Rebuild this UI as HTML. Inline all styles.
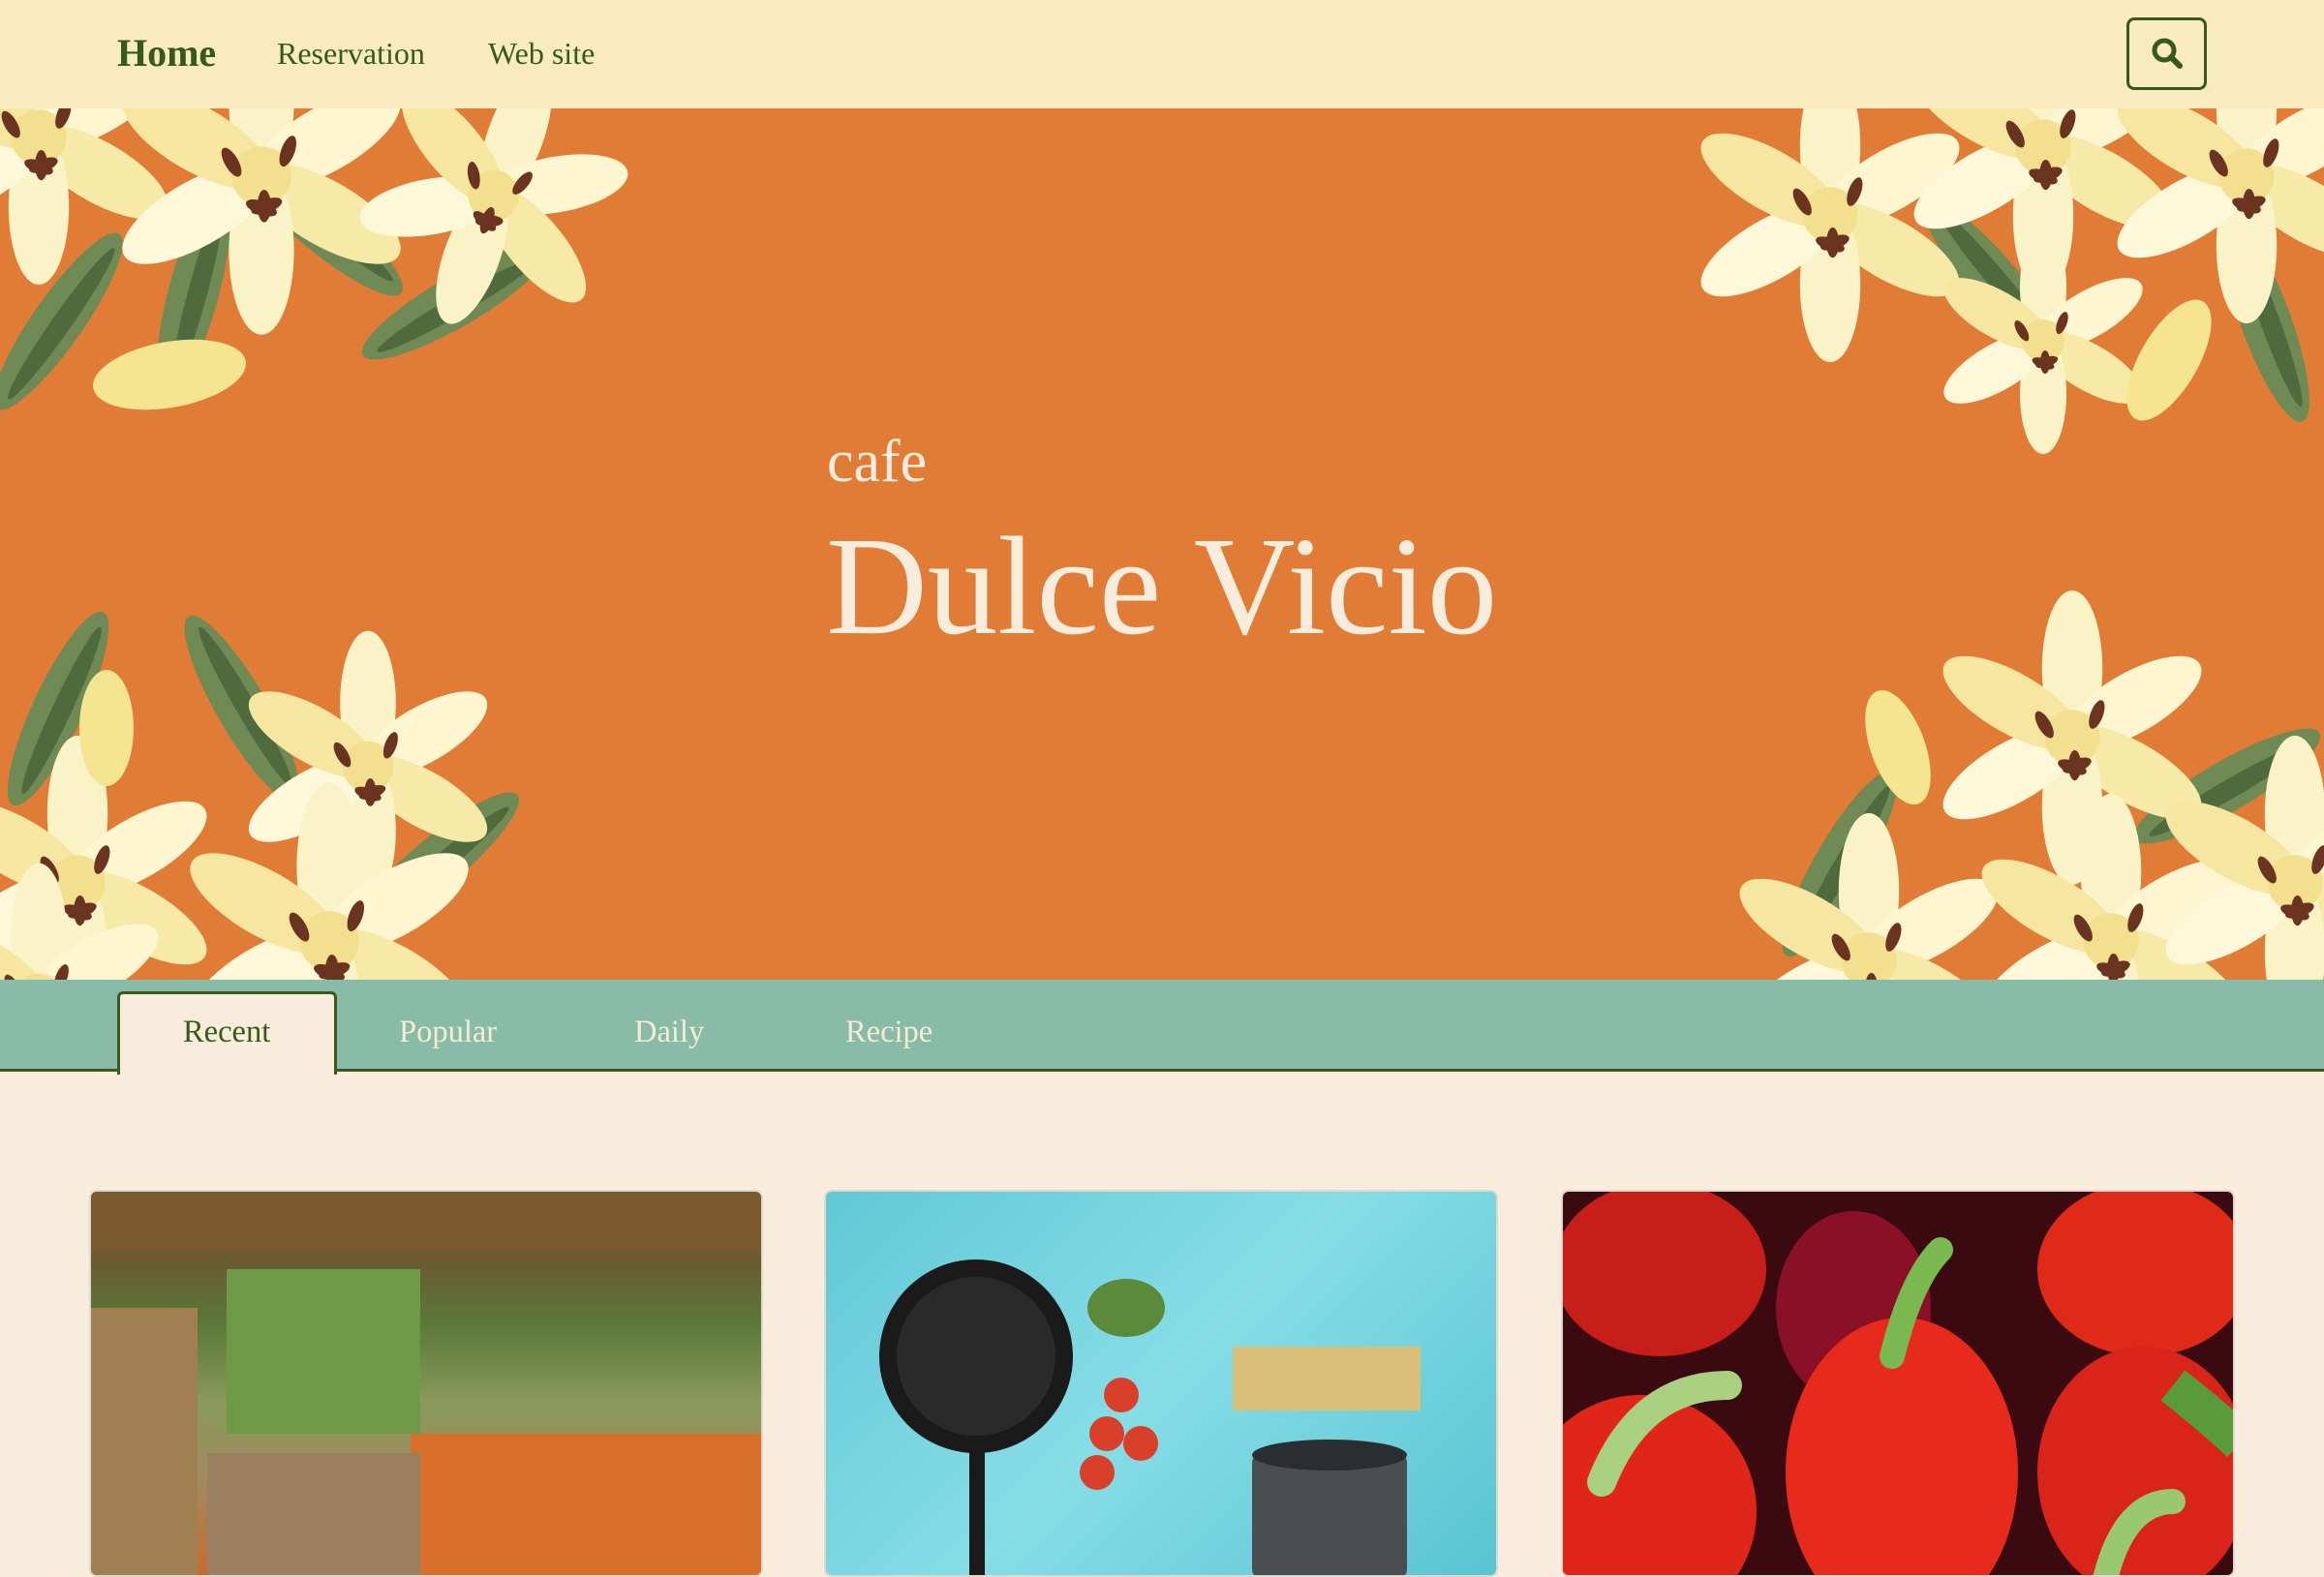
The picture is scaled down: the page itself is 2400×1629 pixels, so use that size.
<!DOCTYPE html>
<html><head><meta charset="utf-8">
<style>
*{margin:0;padding:0;box-sizing:border-box}
body{width:2400px;height:1606px;overflow:hidden;background:#f8ecdc;font-family:"Liberation Serif",serif;position:relative}
.nav{position:absolute;left:0;top:0;width:2400px;height:112px;background:#f9ebbe}
.nav span{position:absolute;color:#365a1c;white-space:nowrap}
.hero{position:absolute;left:0;top:112px;width:2400px;height:900px;background:#e17c36;overflow:hidden}
.t{position:absolute;color:#f8ecdc;white-space:nowrap;line-height:1}
.tabs{position:absolute;left:0;top:1012px;width:2400px;height:95px;background:#88bca8;border-bottom:3px solid #3a5a1c}
.tab{position:absolute;top:0;font-size:32.5px;color:#f6ecd6;line-height:1;white-space:nowrap}
.active{position:absolute;left:121px;top:12px;width:227px;height:86px;background:#f8ecdc;border:3px solid #3a5a1c;border-bottom:none;border-radius:6px 6px 0 0}
.card{position:absolute;top:1229px;width:696px;height:400px;border-radius:8px;overflow:hidden;border:2px solid #e0d8d0}
</style></head><body>
<div class="nav">
<span style="left:121px;top:31px;font-size:40px;font-weight:bold">Home</span>
<span style="left:286px;top:37px;font-size:32px">Reservation</span>
<span style="left:504px;top:37px;font-size:32px">Web site</span>
<div style="position:absolute;left:2196px;top:18px;width:83px;height:75px;border:3px solid #365a1c;border-radius:8px"></div>
<svg style="position:absolute;left:2196px;top:18px" width="83" height="75"><circle cx="39" cy="34" r="10" fill="none" stroke="#365a1c" stroke-width="5"/><line x1="46" y1="41" x2="55" y2="50" stroke="#365a1c" stroke-width="6" stroke-linecap="round"/></svg>
</div>
<div class="hero">
<svg width="2400" height="900" style="position:absolute;left:0;top:0">
<defs>
<g id="lily">
<ellipse cx="0" cy="-55" rx="24" ry="62" fill="#fbf3c8"/>
<ellipse cx="0" cy="-55" rx="24" ry="62" fill="#fdf6d0" transform="rotate(60)"/>
<ellipse cx="0" cy="-55" rx="24" ry="62" fill="#f7e9a8" transform="rotate(120)"/>
<ellipse cx="0" cy="-55" rx="24" ry="62" fill="#fbf3c8" transform="rotate(180)"/>
<ellipse cx="0" cy="-55" rx="24" ry="62" fill="#fdf8da" transform="rotate(240)"/>
<ellipse cx="0" cy="-55" rx="24" ry="62" fill="#f6e6a0" transform="rotate(300)"/>
<circle r="22" fill="#f2e08e"/>
<ellipse cx="-14" cy="-20" rx="5" ry="12" fill="#6a3420" transform="rotate(-30)"/>
<ellipse cx="12" cy="-24" rx="5" ry="12" fill="#6a3420" transform="rotate(20)"/>
<ellipse cx="22" cy="4" rx="5" ry="12" fill="#6a3420" transform="rotate(70)"/>
<ellipse cx="-22" cy="8" rx="5" ry="12" fill="#6a3420" transform="rotate(-70)"/>
<ellipse cx="2" cy="22" rx="5" ry="12" fill="#6a3420"/>
</g>
<g id="leaf"><ellipse cx="0" cy="0" rx="26" ry="110" fill="#6f8a54"/><ellipse cx="4" cy="0" rx="10" ry="95" fill="#4f6a3c"/></g>
</defs>
<use href="#leaf" transform="translate(60,220) rotate(35)"/>
<use href="#leaf" transform="translate(200,190) rotate(15)"/>
<use href="#leaf" transform="translate(470,200) rotate(60)"/>
<use href="#leaf" transform="translate(330,120) rotate(-50)"/>
<use href="#lily" transform="translate(40,30) scale(1.3)"/>
<use href="#lily" transform="translate(270,70) scale(1.4)"/>
<use href="#lily" transform="translate(510,90) scale(1.2) rotate(20)"/>
<ellipse cx="175" cy="275" rx="80" ry="34" fill="#f5e490" transform="rotate(-10 175 275)"/>
<use href="#leaf" transform="translate(60,620) rotate(25)"/>
<use href="#leaf" transform="translate(450,780) rotate(50)"/>
<use href="#leaf" transform="translate(250,620) rotate(-30)"/>
<use href="#lily" transform="translate(80,800) scale(1.3)"/>
<use href="#lily" transform="translate(380,680) scale(1.2)"/>
<use href="#lily" transform="translate(340,860) scale(1.4)"/>
<use href="#lily" transform="translate(40,920) scale(1.2)"/>
<ellipse cx="110" cy="640" rx="28" ry="60" fill="#f5e490"/>
<use href="#leaf" transform="translate(2060,180) rotate(-40)"/>
<use href="#leaf" transform="translate(2340,220) rotate(-20)"/>
<use href="#lily" transform="translate(1890,110) scale(1.3)"/>
<use href="#lily" transform="translate(2110,40) scale(1.3)"/>
<use href="#lily" transform="translate(2320,70) scale(1.3)"/>
<use href="#lily" transform="translate(2110,240) scale(1.0)"/>
<ellipse cx="2240" cy="260" rx="30" ry="70" fill="#f5e490" transform="rotate(30 2240 260)"/>
<use href="#leaf" transform="translate(1900,780) rotate(30)"/>
<use href="#leaf" transform="translate(2300,700) rotate(60)"/>
<use href="#lily" transform="translate(2140,650) scale(1.3)"/>
<use href="#lily" transform="translate(1930,880) scale(1.3)"/>
<use href="#lily" transform="translate(2180,860) scale(1.3)"/>
<use href="#lily" transform="translate(2370,800) scale(1.3)"/>
<ellipse cx="1960" cy="660" rx="28" ry="62" fill="#f5e490" transform="rotate(-20 1960 660)"/>
</svg>
<div class="t" style="left:854px;top:334px;font-size:62px">cafe</div>
<div class="t" style="left:853px;top:422px;font-size:145px">Dulce Vicio</div>
</div>
<div class="tabs">
<div class="active"></div>
<div class="tab" style="left:189px;top:38px;color:#365a1c">Recent</div>
<div class="tab" style="left:412px;top:38px">Popular</div>
<div class="tab" style="left:655px;top:38px">Daily</div>
<div class="tab" style="left:873px;top:38px">Recipe</div>
</div>
<div class="card" style="left:92px;background:linear-gradient(180deg,#8a6a38 0%,#6a5a30 18%,#5b7a3a 35%,#8a9a5a 55%,#a08a60 75%,#c86a30 100%)">
<svg width="696" height="400"><rect x="0" y="0" width="696" height="60" fill="#7a5a2c"/><rect x="330" y="250" width="366" height="150" fill="#d8702c"/><rect x="120" y="270" width="220" height="130" fill="#9a8060"/><rect x="140" y="80" width="200" height="170" fill="#6e9a48"/><rect x="0" y="120" width="110" height="280" fill="#a08050"/></svg>
</div>
<div class="card" style="left:851px;background:linear-gradient(135deg,#62c8d6,#86dde6 50%,#58c4d2)">
<svg width="696" height="400"><circle cx="155" cy="170" r="100" fill="#1a1a1a"/><circle cx="155" cy="170" r="82" fill="#2a2a2a"/><rect x="148" y="265" width="16" height="135" fill="#1a1a1a"/><rect x="420" y="160" width="194" height="66" fill="#d9bf7a"/><ellipse cx="310" cy="120" rx="40" ry="30" fill="#5a8a3a"/><circle cx="305" cy="210" r="18" fill="#d8402a"/><circle cx="290" cy="250" r="18" fill="#d8402a"/><circle cx="325" cy="260" r="18" fill="#d8402a"/><circle cx="280" cy="290" r="18" fill="#d8402a"/><rect x="440" y="270" width="160" height="130" rx="10" fill="#4a4e50"/><ellipse cx="520" cy="272" rx="80" ry="16" fill="#2a2e30"/></svg>
</div>
<div class="card" style="left:1612px;background:#3a0a10">
<svg width="696" height="400"><ellipse cx="100" cy="80" rx="110" ry="90" fill="#c81e1a"/><ellipse cx="300" cy="120" rx="80" ry="100" fill="#8a1028"/><ellipse cx="600" cy="80" rx="110" ry="90" fill="#e02a18"/><ellipse cx="600" cy="290" rx="110" ry="130" fill="#d8241a"/><ellipse cx="350" cy="290" rx="120" ry="160" fill="#e62a1c"/><ellipse cx="80" cy="330" rx="120" ry="120" fill="#e02618"/><path d="M340 170 Q360 90 390 60" stroke="#7ab850" stroke-width="26" fill="none" stroke-linecap="round"/><path d="M40 300 Q80 200 170 200" stroke="#a8d080" stroke-width="30" fill="none" stroke-linecap="round"/><path d="M630 200 Q680 240 700 260" stroke="#5a9a3a" stroke-width="40" fill="none"/><path d="M560 400 Q580 320 630 320" stroke="#9ac870" stroke-width="26" fill="none" stroke-linecap="round"/></svg>
</div>
</body></html>
